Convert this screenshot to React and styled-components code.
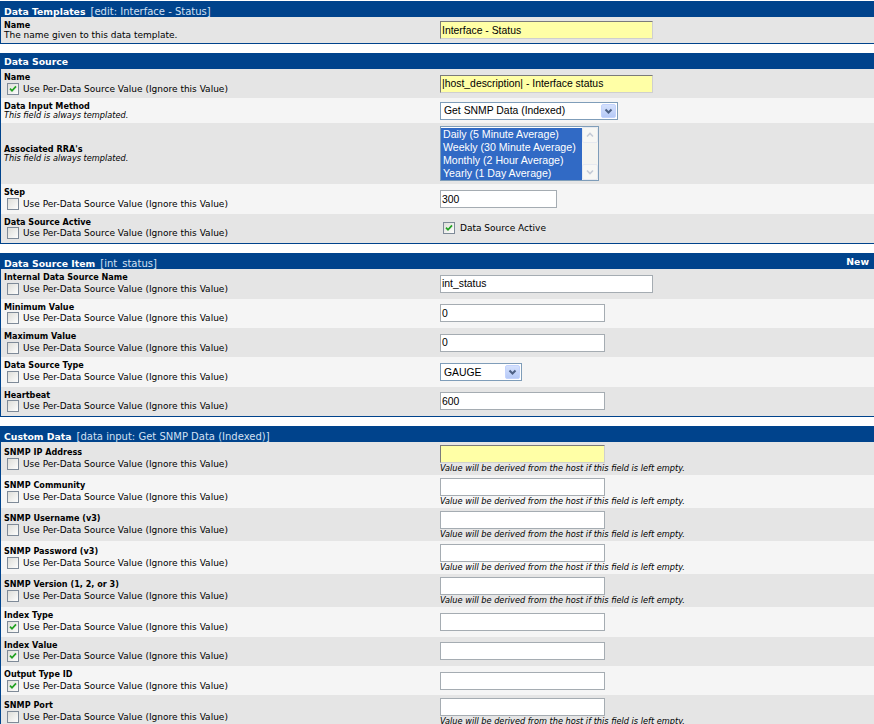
import React from "react";
import styled, { createGlobalStyle } from "styled-components";

const Global = createGlobalStyle`
  html, body { margin: 0; padding: 0; background: #fff; overflow: hidden; }
  body { font-family: "DejaVu Sans", Verdana, sans-serif; color: #000; }
`;

const Page = styled.div`
  width: 876px;
  padding-top: 1px;
`;

const Section = styled.div`
  border: 1px solid #00438c;
  & + & { margin-top: 9px; }
`;

const Header = styled.div`
  height: 15px;
  background: #00438c;
  color: #fff;
  display: flex;
  align-items: center;
  justify-content: space-between;
  padding: 0 6px 0 3px;
  white-space: nowrap;
`;

const HeaderTitle = styled.span`
  font-weight: bold;
  font-size: 9.3px;
`;

const HeaderSub = styled.span`
  font-size: 10px;
  color: #d3e0f3;
`;

const Row = styled.div`
  display: grid;
  grid-template-columns: 436px 1fr;
  background: ${(p) => (p.$alt ? "#f5f5f5" : "#e5e5e5")};
`;

const Cell = styled.div`
  padding: 3px;
  display: flex;
  flex-direction: column;
  justify-content: center;
  align-items: flex-start;
`;

const Label = styled.div`
  font-weight: bold;
  font-size: 8.1px;
  line-height: 10px;
  white-space: nowrap;
`;

const Desc = styled.div`
  font-size: 9px;
  line-height: 10px;
  white-space: nowrap;
`;

const Templated = styled.div`
  font-style: italic;
  font-size: 8.2px;
  line-height: 9px;
  white-space: nowrap;
`;

const CheckLine = styled.div`
  display: flex;
  align-items: center;
  height: 13.4px;
  gap: ${(p) => (p.$gap ? p.$gap : 4)}px;
  margin-left: 3px;
  font-size: 9px;
  white-space: nowrap;
`;

const Input = styled.input.attrs({ readOnly: true, type: "text" })`
  box-sizing: border-box;
  width: ${(p) => p.$w}px;
  height: 18px;
  margin: 0;
  padding: 0 1px;
  font-family: "Liberation Sans", Arial, sans-serif;
  font-size: 10.4px;
  color: #000;
  outline: none;
  background: ${(p) => (p.$yellow ? "#ffffa6" : "#fff")};
  border: 1px solid #a5acb2;
  ${(p) => p.$yellow && "border-color: #7b7b7b #cfcfcf #cfcfcf #7b7b7b;"}
`;

const Hint = styled.div`
  font-style: italic;
  font-size: 8.2px;
  line-height: 8px;
  margin-top: 1px;
  white-space: nowrap;
`;

const SelectBox = styled.div`
  box-sizing: border-box;
  width: ${(p) => p.$w}px;
  height: 18px;
  border: 1px solid #7f9db9;
  background: #fff;
  display: flex;
  align-items: center;
  justify-content: space-between;
  padding: 0 1px 0 3px;
  font-family: "Liberation Sans", Arial, sans-serif;
  font-size: 10.4px;
`;

const ListBox = styled.div`
  box-sizing: border-box;
  width: 159px;
  height: 55px;
  border: 1px solid #7f9db9;
  background: #fff;
  display: flex;
  padding: 1px 0 0 0;
`;

const ListItems = styled.div`
  flex: 1;
  display: flex;
  flex-direction: column;
`;

const ListItem = styled.div`
  background: #316ac5;
  color: #fff;
  font-family: "Liberation Sans", Arial, sans-serif;
  font-size: 10.6px;
  line-height: 13px;
  padding-left: 2px;
  white-space: nowrap;
`;

const ScrollBar = styled.div`
  width: 16px;
  background: #f4f4f0;
  display: flex;
  flex-direction: column;
  justify-content: space-between;
  margin-top: -1px;
`;

const Check = ({ checked }) => (
  <svg width="12" height="12" viewBox="0 0 12 12">
    <defs>
      <linearGradient id="cbg" x1="0" y1="0" x2="1" y2="1">
        <stop offset="0" stopColor="#dcdcd7" />
        <stop offset="1" stopColor="#ffffff" />
      </linearGradient>
    </defs>
    <rect x="0.5" y="0.5" width="11" height="11" fill="url(#cbg)" stroke="#7e8a98" />
    {checked && (
      <polyline points="3,5.6 5,7.8 9,3.4" fill="none" stroke="#21a121" strokeWidth="1.7" />
    )}
  </svg>
);

const DropBtn = () => (
  <svg width="15" height="14" viewBox="0 0 15 14">
    <defs>
      <linearGradient id="dbg" x1="0" y1="0" x2="0" y2="1">
        <stop offset="0" stopColor="#d6e2fd" />
        <stop offset="1" stopColor="#b4c8f6" />
      </linearGradient>
    </defs>
    <rect x="0.5" y="0.5" width="14" height="13" rx="1.5" fill="url(#dbg)" stroke="#c3d3fd" />
    <polyline points="4.5,5.5 7.5,8.5 10.5,5.5" fill="none" stroke="#4d6185" strokeWidth="2" />
  </svg>
);

const ScrollArrow = ({ up }) => (
  <svg width="16" height="16" viewBox="0 0 16 16">
    <rect x="0.5" y="0.5" width="15" height="15" rx="1.5" fill="#f7f7f4" stroke="#e6e9ef" />
    <polyline
      points={up ? "5,9.5 8,6.5 11,9.5" : "5,6.5 8,9.5 11,6.5"}
      fill="none"
      stroke="#c5cbd6"
      strokeWidth="1.6"
    />
  </svg>
);

const PerDS = ({ checked }) => (
  <CheckLine>
    <Check checked={checked} />
    <span>Use Per-Data Source Value (Ignore this Value)</span>
  </CheckLine>
);

const HINT = "Value will be derived from the host if this field is left empty.";

const CheckRow = ({ alt, label, checked, children }) => (
  <Row $alt={alt}>
    <Cell>
      <Label>{label}</Label>
      <PerDS checked={checked} />
    </Cell>
    <Cell>{children}</Cell>
  </Row>
);

const customRows = [
  { label: "SNMP IP Address", yellow: true, hint: true },
  { label: "SNMP Community", hint: true },
  { label: "SNMP Username (v3)", hint: true },
  { label: "SNMP Password (v3)", hint: true },
  { label: "SNMP Version (1, 2, or 3)", hint: true },
  { label: "Index Type", checked: true },
  { label: "Index Value", checked: true },
  { label: "Output Type ID", checked: true },
  { label: "SNMP Port", hint: true },
];

const rras = [
  "Daily (5 Minute Average)",
  "Weekly (30 Minute Average)",
  "Monthly (2 Hour Average)",
  "Yearly (1 Day Average)",
];

export default function App() {
  return (
    <>
      <Global />
      <Page>
        <Section>
          <Header>
            <span>
              <HeaderTitle>Data Templates</HeaderTitle> <HeaderSub>[edit: Interface - Status]</HeaderSub>
            </span>
          </Header>
          <Row>
            <Cell>
              <Label>Name</Label>
              <Desc>The name given to this data template.</Desc>
            </Cell>
            <Cell>
              <Input $w={213} $yellow value="Interface - Status" />
            </Cell>
          </Row>
        </Section>

        <Section>
          <Header>
            <HeaderTitle>Data Source</HeaderTitle>
          </Header>
          <CheckRow label="Name" checked>
            <Input $w={213} $yellow value="|host_description| - Interface status" />
          </CheckRow>
          <Row $alt>
            <Cell>
              <Label>Data Input Method</Label>
              <Templated>This field is always templated.</Templated>
            </Cell>
            <Cell>
              <SelectBox $w={178}>
                <span>Get SNMP Data (Indexed)</span>
                <DropBtn />
              </SelectBox>
            </Cell>
          </Row>
          <Row>
            <Cell>
              <Label>Associated RRA's</Label>
              <Templated>This field is always templated.</Templated>
            </Cell>
            <Cell>
              <ListBox>
                <ListItems>
                  {rras.map((r) => (
                    <ListItem key={r}>{r}</ListItem>
                  ))}
                </ListItems>
                <ScrollBar>
                  <ScrollArrow up />
                  <ScrollArrow />
                </ScrollBar>
              </ListBox>
            </Cell>
          </Row>
          <CheckRow alt label="Step">
            <Input $w={117} value="300" />
          </CheckRow>
          <CheckRow label="Data Source Active">
            <CheckLine $gap={5}>
              <Check checked />
              <span>Data Source Active</span>
            </CheckLine>
          </CheckRow>
        </Section>

        <Section>
          <Header>
            <span>
              <HeaderTitle>Data Source Item</HeaderTitle> <HeaderSub>[int_status]</HeaderSub>
            </span>
            <HeaderTitle>New</HeaderTitle>
          </Header>
          <CheckRow label="Internal Data Source Name">
            <Input $w={213} value="int_status" />
          </CheckRow>
          <CheckRow alt label="Minimum Value">
            <Input $w={165} value="0" />
          </CheckRow>
          <CheckRow label="Maximum Value">
            <Input $w={165} value="0" />
          </CheckRow>
          <CheckRow alt label="Data Source Type">
            <SelectBox $w={82}>
              <span>GAUGE</span>
              <DropBtn />
            </SelectBox>
          </CheckRow>
          <CheckRow label="Heartbeat">
            <Input $w={165} value="600" />
          </CheckRow>
        </Section>

        <Section>
          <Header>
            <span>
              <HeaderTitle>Custom Data</HeaderTitle>{" "}
              <HeaderSub>[data input: Get SNMP Data (Indexed)]</HeaderSub>
            </span>
          </Header>
          {customRows.map((r, i) => (
            <CheckRow key={r.label} alt={i % 2 === 1} label={r.label} checked={r.checked}>
              <Input $w={165} $yellow={r.yellow} value="" />
              {r.hint && <Hint>{HINT}</Hint>}
            </CheckRow>
          ))}
        </Section>
      </Page>
    </>
  );
}
